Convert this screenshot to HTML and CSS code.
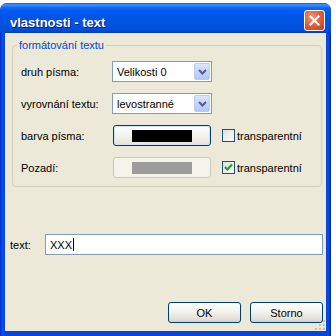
FILE: index.html
```html
<!DOCTYPE html>
<html lang="cs">

<head>
  <meta charset="UTF-8">
  <meta name="viewport" content="width=device-width, initial-scale=1.0">
  <title>vlastnosti - text</title>
  <link rel="stylesheet" href="styles.css">
</head>

<body>
  <div class="window">
    <div class="titlebar">
      <span class="title">vlastnosti - text</span>
      <button class="close" aria-label="zavřít">
        <svg width="13" height="13" viewBox="0 0 13 13">
          <path d="M2.5 2.5 L10.5 10.5 M10.5 2.5 L2.5 10.5" stroke="#fff" stroke-width="2.2" stroke-linecap="square" />
        </svg>
      </button>
    </div>

    <div class="client">
      <fieldset class="group">
        <legend>formátování textu</legend>
        <div class="form-grid">
          <label class="lbl">druh písma:</label>
          <div class="combo">
            <span class="combo-text">Velikosti 0</span>
            <span class="combo-btn">
              <svg width="9" height="6" viewBox="0 0 9 6"><path d="M1 1 L4.5 4.5 L8 1" fill="none" stroke="#4D6185" stroke-width="2" /></svg>
            </span>
          </div>
          <span></span>

          <label class="lbl">vyrovnání textu:</label>
          <div class="combo">
            <span class="combo-text">levostranné</span>
            <span class="combo-btn">
              <svg width="9" height="6" viewBox="0 0 9 6"><path d="M1 1 L4.5 4.5 L8 1" fill="none" stroke="#4D6185" stroke-width="2" /></svg>
            </span>
          </div>
          <span></span>

          <label class="lbl">barva písma:</label>
          <button class="color-btn is-focus"><span class="swatch swatch-black"></span></button>
          <label class="check">
            <span class="check-box"></span>
            <span>transparentní</span>
          </label>

          <label class="lbl">Pozadí:</label>
          <button class="color-btn is-disabled"><span class="swatch swatch-gray"></span></button>
          <label class="check">
            <span class="check-box">
              <svg width="11" height="11" viewBox="0 0 11 11"><path d="M2 5 L4.3 7.5 L9 2.5" fill="none" stroke="#21A121" stroke-width="2.2" /></svg>
            </span>
            <span>transparentní</span>
          </label>
        </div>
      </fieldset>

      <div class="text-row">
        <label class="text-lbl">text:</label>
        <div class="input">XXX<span class="caret"></span></div>
      </div>

      <div class="buttons">
        <button class="btn">OK</button>
        <button class="btn">Storno</button>
      </div>

      <!-- úchyt pro změnu velikosti -->
      <svg class="grip" width="11" height="11" viewBox="0 0 11 11">
        <rect x="8" y="0" width="2" height="2" fill="#C5C2B2" />
        <rect x="4" y="4" width="2" height="2" fill="#C5C2B2" />
        <rect x="8" y="4" width="2" height="2" fill="#C5C2B2" />
        <rect x="0" y="8" width="2" height="2" fill="#C5C2B2" />
        <rect x="4" y="8" width="2" height="2" fill="#C5C2B2" />
        <rect x="8" y="8" width="2" height="2" fill="#C5C2B2" />
      </svg>
    </div>
  </div>
</body>

</html>
```

FILE: styles.css
```css
:root {
  --face: #ECE9D8;
  --xp-blue: #0054E3;
  --field-border: #7F9DB9;
}

* {
  box-sizing: border-box;
}

body {
  margin: 0;
  background: #fff;
  font: 11px "Liberation Sans", Arial, sans-serif;
  color: #000;
}

.window {
  width: 331px;
  height: 333px;
  margin-top: 3px;
  display: flex;
  flex-direction: column;
  background: linear-gradient(to right, #0019CF 0, #0843DC 1px, #0055EA 3px, #0843DC 4px, #0843DC calc(100% - 4px), #0055EA calc(100% - 3px), #001EA0 100%);
  border-radius: 7px 7px 0 0;
  overflow: hidden;
}

.titlebar {
  height: 30px;
  flex: none;
  display: flex;
  align-items: flex-start;
  padding: 0 6px 0 10px;
  border-radius: 7px 7px 0 0;
  background: linear-gradient(to bottom, #0A5FEA 0, #3D95FF 2px, #1A6CF6 4px, #0058EE 8px, #0054E3 60%, #0050D8 88%, #003DC9 100%);
}

.title {
  flex: 1;
  margin-top: 12px;
  color: #fff;
  font: bold 13px "Liberation Sans", Arial, sans-serif;
  line-height: 15px;
  text-shadow: 1px 1px #0A1883;
}

.close {
  width: 21px;
  height: 21px;
  margin-top: 7px;
  padding: 0;
  display: flex;
  align-items: center;
  justify-content: center;
  border: 1px solid #fff;
  border-radius: 3px;
  background: radial-gradient(circle at 35% 30%, #F0947A 0, #E2623C 45%, #C43D15 100%);
}

.client {
  flex: 1;
  margin: 0 5px 5px;
  padding: 6px 4px 8px 7px;
  background: var(--face);
  display: flex;
  flex-direction: column;
  position: relative;
}

.group {
  margin: 0;
  padding: 0 8px 8px;
  border: 1px solid #D0D0BF;
  border-radius: 4px;
}

.group legend {
  margin-left: -4px;
  padding: 0 2px;
  line-height: 13px;
  color: #0046D5;
}

.form-grid {
  margin-top: 9px;
  display: grid;
  grid-template-columns: 81px 100px auto;
  grid-auto-rows: 21px;
  column-gap: 10px;
  row-gap: 11px;
  align-items: center;
}

.combo {
  height: 21px;
  display: flex;
  align-items: center;
  border: 1px solid var(--field-border);
  background: #fff;
  padding: 1px;
}

.combo-text {
  flex: 1;
  padding-left: 3px;
}

.combo-btn {
  width: 16px;
  height: 17px;
  display: flex;
  align-items: center;
  justify-content: center;
  border: 1px solid #BACCF6;
  border-radius: 2px;
  background: linear-gradient(to bottom, #DCE6FE, #C0D2F9 60%, #B3C7F5);
}

.color-btn {
  width: 98px;
  height: 21px;
  margin-left: 1px;
  padding: 0 0 0 18px;
  display: flex;
  align-items: center;
  border-radius: 3px;
  background: linear-gradient(to bottom, #FFFFFF, #F3F2EC 50%, #E6E3D6);
}

.color-btn.is-focus {
  border: 1px solid #003C74;
  box-shadow: inset 0 0 0 1px #CEE7FF;
}

.color-btn.is-disabled {
  border: 1px solid #CAC8BB;
  background: #F5F4EA;
}

.swatch {
  width: 60px;
  height: 12px;
}

.swatch-black {
  background: #000;
}

.swatch-gray {
  background: #9C9C9C;
}

.check {
  display: flex;
  align-items: center;
  gap: 2px;
}

.check-box {
  width: 13px;
  height: 13px;
  display: flex;
  align-items: center;
  justify-content: center;
  border: 1px solid #1C5180;
  background: linear-gradient(135deg, #DCDCD7, #FFFFFF);
}

.text-row {
  margin-top: 47px;
  margin-left: -2px;
  margin-right: -1px;
  display: flex;
  align-items: center;
}

.text-lbl {
  width: 35px;
}

.input {
  flex: 1;
  height: 21px;
  padding-left: 4px;
  display: flex;
  align-items: center;
  border: 1px solid var(--field-border);
  background: #fff;
}

.caret {
  width: 1px;
  height: 13px;
  margin-left: 1px;
  background: #000;
}

.buttons {
  margin-top: auto;
  margin-right: -1px;
  display: flex;
  justify-content: flex-end;
  gap: 9px;
}

.btn {
  width: 73px;
  height: 21px;
  padding: 0;
  border: 1px solid #003C74;
  border-radius: 3px;
  background: linear-gradient(to bottom, #FFFFFF, #F4F3EE 45%, #E3E0D5 85%, #D6D0C5);
  font: 11px "Liberation Sans", Arial, sans-serif;
  color: #000;
}

.grip {
  position: absolute;
  right: 0;
  bottom: 0;
}
```
